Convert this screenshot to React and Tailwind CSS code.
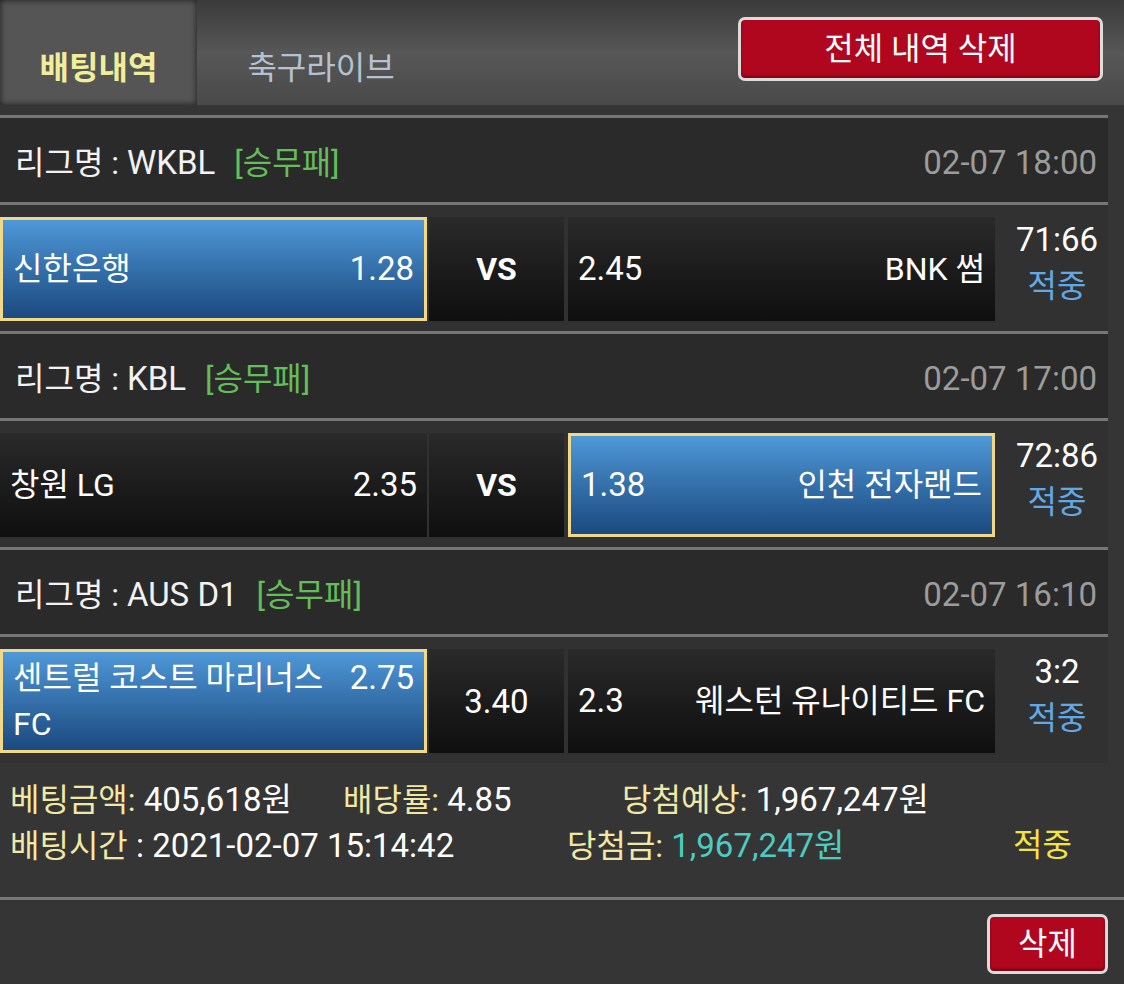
import React from 'react';

const GAMES = [
  {
    league: 'WKBL',
    time: '02-07 18:00',
    home: '신한은행',
    homeOdds: '1.28',
    mid: 'VS',
    away: 'BNK 썸',
    awayOdds: '2.45',
    pick: 'home',
    score: '71:66',
  },
  {
    league: 'KBL',
    time: '02-07 17:00',
    home: '창원 LG',
    homeOdds: '2.35',
    mid: 'VS',
    away: '인천 전자랜드',
    awayOdds: '1.38',
    pick: 'away',
    score: '72:86',
  },
  {
    league: 'AUS D1',
    time: '02-07 16:10',
    home: (
      <>
        센트럴 코스트 마리너스
        <br />
        FC
      </>
    ),
    homeOdds: '2.75',
    mid: '3.40',
    away: '웨스턴 유나이티드 FC',
    awayOdds: '2.3',
    pick: 'home',
    score: '3:2',
  },
];

const cellBase = 'h-[104px] flex items-center px-[10px] text-white';
const picked = 'bg-gradient-to-b from-[#4f98d8] to-[#1b4a7f] border-[3px] border-[#f2d98a]';
const plain = 'bg-gradient-to-b from-[#2a2a2a] to-[#0f0f0f]';

const LeagueRow = ({ game }) => (
  <div className="h-[90px] border-y-[3px] border-[#767676] bg-[#2a2a2a] flex items-center justify-between pl-[15px] pr-[11px] pt-[5px]">
    <div className="flex items-center">
      <span className="text-[#f2f2f2]">
        리그명 : <span className="text-[33px]">{game.league}</span>
      </span>
      <span className="ml-[19px] text-[#63bd58]">[승무패]</span>
    </div>
    <span className="text-[33px] text-[#9c9c9c]">{game.time}</span>
  </div>
);

const MatchRow = ({ game }) => (
  <div className="flex bg-[#313131] pt-[12px] pb-[10px]">
    <div className={`${cellBase} w-[427px] ${game.pick === 'home' ? picked : plain}`}>
      <div className="flex w-full items-start justify-between leading-[46px]">
        <span>{game.home}</span>
        <span className="text-[33px]">{game.homeOdds}</span>
      </div>
    </div>
    <div className={`${cellBase} ${plain} ml-[2px] w-[135px] justify-center`}>
      <span className={game.mid === 'VS' ? 'font-bold' : 'text-[33px]'}>{game.mid}</span>
    </div>
    <div className={`${cellBase} ml-[4px] w-[427px] ${game.pick === 'away' ? picked : plain}`}>
      <div className="flex w-full items-start justify-between leading-[46px]">
        <span className="text-[33px]">{game.awayOdds}</span>
        <span>{game.away}</span>
      </div>
    </div>
    <div className="flex-1 pl-[11px] flex flex-col items-center leading-[46px]">
      <span className="text-[33px] text-white">{game.score}</span>
      <span className="text-[#62a8e4]">적중</span>
    </div>
  </div>
);

export default function App() {
  return (
    <div className="min-h-[984px] bg-[#353535] font-['Roboto','Noto_Sans_CJK_KR',sans-serif] text-[32px] leading-none">
      {/* header */}
      <div className="flex h-[105px] bg-gradient-to-b from-[#3b3b3b] via-[#575757] to-[#494949]">
        <div className="w-[197px] bg-[#555] shadow-[inset_0_0_6px_rgba(0,0,0,0.7)] flex items-center justify-center pt-[30px]">
          <span className="font-bold text-[#f1ee9b]">배팅내역</span>
        </div>
        <div className="w-[248px] flex items-center justify-center pt-[30px]">
          <span className="text-[#b6c2d2]">축구라이브</span>
        </div>
        <div className="flex-1 flex justify-end items-start pt-[17px] pr-[21px]">
          <button className="w-[365px] h-[64px] rounded-[7px] border-[3px] border-[#dcdcdc] bg-[#b0071f] text-white text-[32px] shadow-[inset_0_-2px_3px_rgba(0,0,0,0.35)]">
            전체 내역 삭제
          </button>
        </div>
      </div>

      {/* bet list */}
      <div className="w-[1108px] mt-[10px]">
        {GAMES.map((game, i) => (
          <div key={i}>
            <LeagueRow game={game} />
            <MatchRow game={game} />
          </div>
        ))}
      </div>

      {/* summary */}
      <div className="pt-[14px] pb-[28px] pl-[10px] leading-[45px] text-[33px]">
        <div className="flex">
          <span className="w-[333px]">
            <span className="text-[32px] text-[#f2e8a6]">베팅금액:</span>
            <span className="text-white"> 405,618원</span>
          </span>
          <span className="w-[279px]">
            <span className="text-[32px] text-[#f2e8a6]">배당률:</span>
            <span className="text-white"> 4.85</span>
          </span>
          <span>
            <span className="text-[32px] text-[#f2e8a6]">당첨예상:</span>
            <span className="text-white"> 1,967,247원</span>
          </span>
        </div>
        <div className="flex">
          <span className="w-[557px]">
            <span className="text-[32px] text-[#f2e8a6]">배팅시간</span>
            <span className="text-white"> : 2021-02-07 15:14:42</span>
          </span>
          <span className="w-[446px]">
            <span className="text-[32px] text-[#f2e8a6]">당첨금:</span>
            <span className="text-[#4cccc3]"> 1,967,247원</span>
          </span>
          <span className="text-[32px] text-[#f4e443]">적중</span>
        </div>
      </div>

      <div className="border-t-[3px] border-[#767676] flex justify-end pt-[14px] pb-[10px] pr-[16px]">
        <button className="w-[121px] h-[60px] rounded-[7px] border-[3px] border-[#dcdcdc] bg-[#b0071f] text-white text-[32px] shadow-[inset_0_-2px_3px_rgba(0,0,0,0.35)]">
          삭제
        </button>
      </div>
    </div>
  );
}
